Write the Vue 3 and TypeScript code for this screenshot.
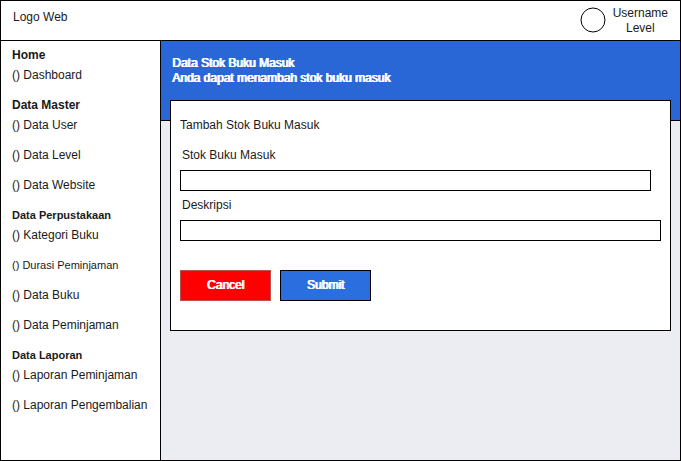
<script setup lang="ts">
import { ref } from 'vue'

interface MenuItem {
  label: string
  small?: boolean
}

interface MenuSection {
  title: string
  small?: boolean
  items: MenuItem[]
}

const menu: MenuSection[] = [
  { title: 'Home', items: [{ label: 'Dashboard' }] },
  {
    title: 'Data Master',
    items: [{ label: 'Data User' }, { label: 'Data Level' }, { label: 'Data Website' }],
  },
  {
    title: 'Data Perpustakaan',
    small: true,
    items: [
      { label: 'Kategori Buku' },
      { label: 'Durasi Peminjaman', small: true },
      { label: 'Data Buku' },
      { label: 'Data Peminjaman' },
    ],
  },
  {
    title: 'Data Laporan',
    small: true,
    items: [{ label: 'Laporan Peminjaman' }, { label: 'Laporan Pengembalian' }],
  },
]

const stok = ref('')
const deskripsi = ref('')

function reset(): void {
  stok.value = ''
  deskripsi.value = ''
}
</script>

<template>
  <div class="page">
    <header class="topbar">
      <span class="logo">Logo Web</span>
      <div class="account">
        <svg class="avatar" viewBox="0 0 26 26" aria-hidden="true">
          <circle cx="13" cy="13" r="12" fill="#fff" stroke="#000" />
        </svg>
        <div class="who">
          <div>Username</div>
          <div>Level</div>
        </div>
      </div>
    </header>

    <div class="body">
      <nav class="sidebar">
        <section v-for="section in menu" :key="section.title">
          <h2 class="section-title" :class="{ small: section.small }">{{ section.title }}</h2>
          <ul class="links">
            <li v-for="item in section.items" :key="item.label" :class="{ small: item.small }">
              <a href="#">() {{ item.label }}</a>
            </li>
          </ul>
        </section>
      </nav>

      <main class="content">
        <div class="banner">
          <h1>Data Stok Buku Masuk</h1>
          <p>Anda dapat menambah stok buku masuk</p>
        </div>
        <form class="card" @submit.prevent>
          <h2 class="card-title">Tambah Stok Buku Masuk</h2>
          <div class="field field-short">
            <label for="stok">Stok Buku Masuk</label>
            <input id="stok" v-model="stok" type="text" />
          </div>
          <div class="field">
            <label for="deskripsi">Deskripsi</label>
            <input id="deskripsi" v-model="deskripsi" type="text" />
          </div>
          <div class="actions">
            <button type="button" class="cancel" @click="reset">Cancel</button>
            <button type="submit" class="submit">Submit</button>
          </div>
        </form>
      </main>
    </div>
  </div>
</template>

<style>
body {
  margin: 0;
}
</style>

<style scoped>
.page,
.page * {
  box-sizing: border-box;
}

.page {
  display: flex;
  flex-direction: column;
  min-height: 100vh;
  border: 1px solid #000;
  background: #fff;
  color: #1a1a1a;
  font-family: "Liberation Sans", Arial, sans-serif;
  font-size: 12px;
  line-height: 20px;
}

h1,
h2,
p,
ul {
  margin: 0;
  padding: 0;
  font-size: inherit;
}

.topbar {
  display: flex;
  justify-content: space-between;
  align-items: flex-start;
  height: 40px;
  padding: 0 12px;
  border-bottom: 1px solid #000;
}

.logo {
  padding-top: 6px;
}

.account {
  display: flex;
  gap: 7px;
  padding-top: 5px;
}

.avatar {
  width: 26px;
  height: 26px;
  margin-top: 1px;
}

.who {
  line-height: 15px;
  text-align: center;
}

.body {
  display: flex;
  flex: 1;
}

.sidebar {
  flex: none;
  width: 160px;
  padding: 4px 0 4px 11px;
  border-right: 1px solid #000;
}

.section-title {
  font-weight: bold;
}

.links {
  list-style: none;
}

.links li {
  margin-bottom: 10px;
}

.links a {
  color: inherit;
  text-decoration: none;
}

.small {
  font-size: 11px;
}

.content {
  flex: 1;
  min-width: 0;
  background: #ebedf3;
}

/* White text on colour: regular width, thickened by shadows */
.banner,
.actions button {
  color: #fff;
  text-shadow: 0 0 0 #fff, 1px 0 0 #fff;
}

.banner {
  height: 80px;
  padding: 15px 11px 0;
  border-bottom: 1px solid #000;
  background: #2967d6;
  line-height: 15px;
}

.banner h1 {
  font-weight: normal;
}

.card {
  position: relative;
  margin: -21px 9px 0;
  padding: 14px 9px 29px;
  border: 1px solid #000;
  background: #fff;
}

.card-title {
  margin-bottom: 10px;
  font-weight: normal;
}

.field {
  display: flex;
  flex-direction: column;
  gap: 5px;
  margin-bottom: 4px;
}

.field-short {
  margin-right: 10px;
}

.field label {
  padding-left: 2px;
}

.field input {
  width: 100%;
  height: 21px;
  margin: 0;
  padding: 0 4px;
  border: 1px solid #000;
  border-radius: 0;
  background: #fff;
  font: inherit;
}

.actions {
  display: flex;
  gap: 9px;
  padding-top: 25px;
}

.actions button {
  width: 91px;
  height: 31px;
  padding: 0 0 2px;
  border: 1px solid #000;
  border-radius: 0;
  font: inherit;
}

.actions .cancel {
  border-color: #b85450;
  background: #f00;
}

.actions .submit {
  background: #2a6edf;
}
</style>
